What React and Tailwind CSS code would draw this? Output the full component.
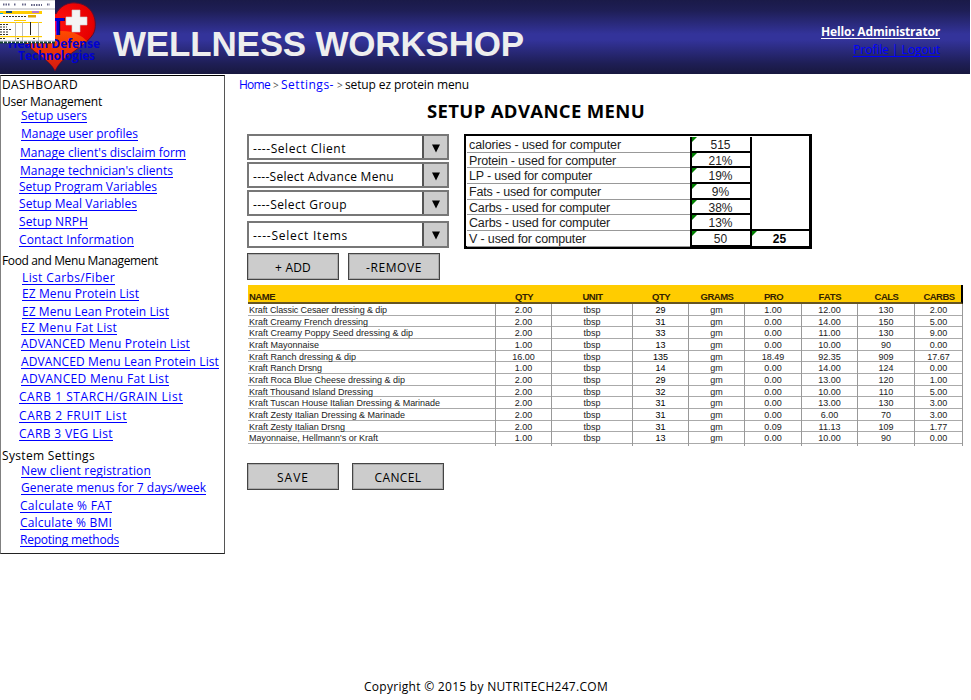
import { useLayoutEffect, useRef, useState } from 'react';

const HAND = "font-['Comic_Sans_MS','Open_Sans',sans-serif]";
const ARIAL = "font-['Liberation_Sans',Arial,sans-serif]";

// Tracks its text so that the line fills the given width.
function Fit({ w, children, className = '' }) {
  const ref = useRef(null);
  const [gap, setGap] = useState(0);
  useLayoutEffect(() => {
    const natural = ref.current.getBoundingClientRect().width;
    setGap((w - natural) / String(children).length);
  }, []);
  return (
    <span ref={ref} className={`inline-block whitespace-pre ${className}`} style={{ letterSpacing: gap }}>
      {children}
    </span>
  );
}

const LINK = 'text-[#0000ff] underline decoration-1 underline-offset-2 [text-decoration-skip-ink:none]';

const NAV = [
  ['DASHBOARD', 76, 'h-[16px] pl-px', 0],
  ['User Management', 100, 'h-[17px] pl-px', 0],
  ['Setup users', 66, 'h-[14px] pl-[20px]', 1],
  ['Manage user profiles', 117, 'h-[18px] pl-[20px]', 1],
  ["Manage client's disclaim form", 166, 'h-[19px] pl-[19px]', 1],
  ["Manage technician's clients", 153, 'h-[18px] pl-[19px]', 1],
  ['Setup Program Variables', 138, 'h-[16px] pl-[18px]', 1],
  ['Setup Meal Variables', 118, 'h-[17px] pl-[18px]', 1],
  ['Setup NRPH', 69, 'h-[18px] pl-[18px]', 1],
  ['Contact Information', 115, 'h-[18px] pl-[18px]', 1],
  ['Food and Menu Management', 156, 'h-[21px] pl-px', 0],
  ['List Carbs/Fiber', 93, 'h-[17px] pl-[21px]', 1],
  ['EZ Menu Protein List', 117, 'h-[16px] pl-[21px]', 1],
  ['EZ Menu Lean Protein List', 147, 'h-[18px] pl-[21px]', 1],
  ['EZ Menu Fat List', 96, 'h-[16px] pl-[20px]', 1],
  ['ADVANCED Menu Protein List', 169, 'h-[16px] pl-[20px]', 1],
  ['ADVANCED Menu Lean Protein List', 198, 'h-[18px] pl-[20px]', 1],
  ['ADVANCED Menu Fat List', 148, 'h-[17px] pl-[20px]', 1],
  ['CARB 1 STARCH/GRAIN List', 164, 'h-[18px] pl-[18px]', 1],
  ['CARB 2 FRUIT List', 108, 'h-[19px] pl-[18px]', 1],
  ['CARB 3 VEG List', 94, 'h-[18px] pl-[18px]', 1],
  ['System Settings', 93, 'h-[22px] pl-px', 0],
  ['New client registration', 130, 'h-[15px] pl-[20px]', 1],
  ['Generate menus for 7 days/week', 185, 'h-[17px] pl-[20px]', 1],
  ['Calculate % FAT', 92, 'h-[18px] pl-[19px]', 1],
  ['Calculate % BMI', 92, 'h-[17px] pl-[19px]', 1],
  ['Repoting methods', 99, 'h-[17px] pl-[19px]', 1],
];

const SELECTS = [
  ['----Select Client', 93, 'mt-0 h-[26px]'],
  ['----Select Advance Menu', 141, 'mt-[2px] h-[26px]'],
  ['----Select Group', 94, 'mt-[2px] h-[26px]'],
  ['----Select Items', 95, 'mt-[5px] h-[27px]'],
];

const MACROS = [
  ['calories - used for computer', 152, '515'],
  ['Protein - used for computer', 147, '21%'],
  ['LP - used for computer', 123, '19%'],
  ['Fats - used for computer', 132, '9%'],
  ['Carbs - used for computer', 141, '38%'],
  ['Carbs - used for computer', 141, '13%'],
  ['V - used for computer', 117, '50'],
];

const HEAD = [['QTY', 18], ['UNIT', 20], ['QTY', 18], ['GRAMS', 33], ['PRO', 19], ['FATS', 23], ['CALS', 24], ['CARBS', 31]];
const FOODS = [
  ['Kraft Classic Cesaer dressing & dip', 138, '2.00', '29', '1.00', '12.00', '130', '2.00'],
  ['Kraft Creamy French dressing', 119, '2.00', '31', '0.00', '14.00', '150', '5.00'],
  ['Kraft Creamy Poppy Seed dressing & dip', 164, '2.00', '33', '0.00', '11.00', '130', '9.00'],
  ['Kraft Mayonnaise', 70, '1.00', '13', '0.00', '10.00', '90', '0.00'],
  ['Kraft Ranch dressing & dip', 107, '16.00', '135', '18.49', '92.35', '909', '17.67'],
  ['Kraft Ranch Drsng', 73, '1.00', '14', '0.00', '14.00', '124', '0.00'],
  ['Kraft Roca Blue Cheese dressing & dip', 156, '2.00', '29', '0.00', '13.00', '120', '1.00'],
  ['Kraft Thousand Island Dressing', 124, '2.00', '32', '0.00', '10.00', '110', '5.00'],
  ['Kraft Tuscan House Italian Dressing & Marinade', 191, '2.00', '31', '0.00', '13.00', '130', '3.00'],
  ['Kraft Zesty Italian Dressing & Marinade', 156, '2.00', '31', '0.00', '6.00', '70', '3.00'],
  ['Kraft Zesty Italian Drsng', 96, '2.00', '31', '0.09', '11.13', '109', '1.77'],
  ["Mayonnaise, Hellmann's or Kraft", 129, '1.00', '13', '0.00', '10.00', '90', '0.00'],
];
const COLS = 'grid grid-cols-[248px_56px_81px_56px_56px_57px_56px_57px_48px]';

function Button({ w, children, className = '' }) {
  return (
    <button className={`flex h-[27px] w-[92px] items-center justify-center border border-[#444] bg-[#ccc] pt-[3px] shadow-[inset_0_0_0_1px_#aaa] ${className}`}>
      <Fit w={w}>{children}</Fit>
    </button>
  );
}

function Corner() {
  return (
    <svg className="absolute left-0 top-0" width="5" height="5">
      <path d="M0 0H5L0 5Z" fill="#008000" />
    </svg>
  );
}

function Logo() {
  return (
    <svg width="110" height="74" viewBox="0 0 110 74" className="block shrink-0">
      <defs>
        <radialGradient id="red" cx="50%" cy="30%" r="65%">
          <stop offset="0" stopColor="#ff1010" />
          <stop offset="0.7" stopColor="#e60000" />
          <stop offset="1" stopColor="#b00000" />
        </radialGradient>
        <linearGradient id="heart" x1="0" y1="0" x2="0" y2="1">
          <stop offset="0" stopColor="#ff4a00" />
          <stop offset="1" stopColor="#d61a10" />
        </linearGradient>
      </defs>
      <path d="M55 71C50 60 36 54 26 44C16 32 20 10 35 6C46 3 53 10 56 14C60 6 68 2 76 3C90 4 97 16 95 29C93 44 62 54 55 71Z" fill="url(#red)" stroke="#5a1030" strokeWidth="1" />
      <path d="M55 70C50 60 36 54 27 44C40 36 52 30 62 31C74 31 82 36 87 41C77 50 61 57 55 70Z" fill="url(#heart)" />
      <path d="M72 10h8v7h7v8h-7v7h-8v-7h-6v-8h6z" fill="#f4f4f4" stroke="#ccc" strokeWidth="0.6" />
      <g fill="#0000d0" fontFamily="'Open Sans', sans-serif" fontWeight="700">
        <text x="51" y="35" fontSize="24">T</text>
        <text x="8" y="47.500" fontSize="12" textLength="92" lengthAdjust="spacingAndGlyphs">Health Defense</text>
        <text x="18" y="60" fontSize="12" textLength="77" lengthAdjust="spacingAndGlyphs">Technologies</text>
      </g>
      <rect width="55" height="43" fill="#fff" />
      <rect width="55" height="1" fill="#ddd" />
      <path d="M3 4.500H10M14 4.500H16M22 4.500H26M31 5H42M47 4.500H50" stroke="#668" strokeWidth="2" strokeDasharray="1.500 1" />
      <rect y="8" width="55" height="2" fill="#d8d8dc" />
      <rect y="11" width="42" height="3" fill="#fc0" />
      <rect x="6" y="11" width="6" height="2" fill="#124a7a" />
      <rect x="32" y="11" width="7" height="2" fill="#b878cc" />
      <rect y="13" width="3" height="1" fill="#00aeda" />
      <path d="M3 16.500H27M29 16.500H35" stroke="#333" strokeDasharray="2 1" />
      <rect x="28" y="15" width="8" height="2.500" fill="#e0a800" />
      <rect x="14" y="20" width="12" height="1" fill="#fc0" />
      <rect y="22" width="42" height="1" fill="#fc0" />
      <path d="M0 24.500H9M0 27H7M0 29.500H11M0 32H8M0 34.500H9M0 38.500H6M17 38.500H19M33 38.500H36" stroke="#333" strokeDasharray="2 1" />
      <path d="M15.500 22V41M22.500 22V41M38.500 22V41" stroke="#bbb" />
      <path d="M30.500 22V35" stroke="#222" />
      <rect y="36" width="42" height="1.200" fill="#fc0" />
      <path d="M0 41H55" stroke="#aac" />
      <path d="M0 42.500H55" stroke="#174334" strokeWidth="2" strokeDasharray="3 1" />
    </svg>
  );
}

export default function App() {
  return (
    <div className={`h-[700px] w-[971px] overflow-hidden bg-white text-[12px] leading-[16px] text-black ${HAND}`}>
      <header className="mr-px flex h-[74px] bg-[linear-gradient(#1a1a48_0%,#1e1e55_14%,#33339a_46%,#33339a_54%,#1e1e55_86%,#18183f_100%)]">
        <Logo />
        <h1 className={`ml-[3px] mt-[24px] text-[35px] font-bold leading-[40px] text-[#eee] ${ARIAL}`}>
          <Fit w={411}>WELLNESS WORKSHOP</Fit>
        </h1>
        <div className="ml-auto mr-[30px] mt-[24px] flex flex-col items-end gap-[2px]">
          <a className="font-bold text-white"><Fit w={119} className="underline underline-offset-2">Hello: Administrator</Fit></a>
          <a><Fit w={87} className={LINK}>Profile | Logout</Fit></a>
        </div>
      </header>

      <div className="mt-px flex h-[603px]">
        <nav className="h-[479px] w-[225px] shrink-0 border border-t-black border-b-[#222] border-l-[#808080] border-r-[#555] leading-[14px]">
          {NAV.map(([label, w, cls, link]) => (
            <div key={label} className={`flex items-end ${cls}`}>
              <Fit w={w} className={link ? LINK : ''}>{label}</Fit>
            </div>
          ))}
        </nav>

        <main className="flex min-w-0 grow flex-col pl-[14px] pt-[2px]">
          <div className="flex h-[16px]">
            <a className="text-[#0000ff]"><Fit w={31}>Home</Fit></a>
            <span className="mx-[3px] w-[5px] text-[10px] text-[#555]">&gt;</span>
            <a className="text-[#0000ff]"><Fit w={53}>Settings-</Fit></a>
            <span className="mx-[3px] w-[5px] text-[10px] text-[#555]">&gt;</span>
            <span><Fit w={124}>setup ez protein menu</Fit></span>
          </div>
          <h2 className="ml-[188px] mt-[6px] text-[18.500px] font-bold leading-[24px]">
            <Fit w={218}>SETUP ADVANCE MENU</Fit>
          </h2>

          <div className="mt-[11px] flex h-[151px] pl-[8px]">
            <div className="w-[202px]">
              {SELECTS.map(([label, w, cls]) => (
                <div key={label} className={`flex border-2 border-[#777] ${cls}`}>
                  <div className="flex grow items-center pl-[4px] pt-[3px]"><Fit w={w}>{label}</Fit></div>
                  <div className="flex w-[25px] items-center justify-center border-l-2 border-[#555] bg-[#ccc] pt-[2px]">
                    <svg width="10" height="9"><path d="M1 0.500H9L5 8.500Z" fill="#000" /></svg>
                  </div>
                </div>
              ))}
              <div className="mt-[5px] flex gap-[9px]">
                <Button w={36}>+ ADD</Button>
                <Button w={56}>-REMOVE</Button>
              </div>
            </div>

            <div className={`ml-[15px] flex h-[115px] w-[348px] border-[3px] border-t-2 border-l-2 border-black pl-px pt-px text-[12.500px] leading-[16px] text-[#222] ${ARIAL}`}>
              <div className="w-[223px] shrink-0">
                {MACROS.map(([label, w], i) => (
                  <div key={i} className="h-[15.700px] border-b border-[#999] pl-[2px]"><Fit w={w}>{label}</Fit></div>
                ))}
              </div>
              <div className="w-[60px] shrink-0 border-l-2 border-black">
                {MACROS.map(([, , value], i) => (
                  <div key={i} className="relative h-[15.700px] border-b-2 border-black pr-px text-center text-[12px]"><Corner />{value}</div>
                ))}
              </div>
              <div className="flex grow flex-col justify-end border-l-2 border-black">
                <div className="relative h-[17px] border-t-2 border-black pr-[2px] text-center text-[12px] font-bold text-black"><Corner />25</div>
              </div>
            </div>
          </div>

          <section className={`ml-[9px] w-[715px] text-[9px] leading-[12px] text-[#222] ${ARIAL}`}>
            <div className={`${COLS} h-[19px] items-end border-b-2 border-r-2 border-b-[#665522] border-r-black bg-[#fc0] text-[9.500px] font-bold leading-[10px] text-[#332200]`}>
              <div className="pl-px"><Fit w={26}>NAME</Fit></div>
              {HEAD.map(([h, w], i) => <div key={i} className="text-center"><Fit w={w}>{h}</Fit></div>)}
            </div>
            {FOODS.map(([name, w, qty, grams, ...rest]) => (
              <div key={name} className={`${COLS} h-[11.660px] border-b border-[#aaa]`}>
                <div className="border-r border-[#999] pl-px"><Fit w={w}>{name}</Fit></div>
                {[qty, 'tbsp', grams, 'gm', ...rest].map((v, i) => (
                  <div key={i} className={`border-r border-[#999] text-center ${i === 2 ? 'text-black' : ''}`}>{v}</div>
                ))}
              </div>
            ))}
            <div className={`${COLS} h-[2px]`}>
              {Array.from({ length: 9 }, (_, i) => <div key={i} className="border-r border-[#999]" />)}
            </div>
          </section>

          <div className="ml-[8px] mt-[17px] flex gap-[13px]">
            <Button w={32}>SAVE</Button>
            <Button w={47}>CANCEL</Button>
          </div>
        </main>
      </div>

      <footer className="pl-[364px] pt-px"><Fit w={244}>Copyright © 2015 by NUTRITECH247.COM</Fit></footer>
    </div>
  );
}
